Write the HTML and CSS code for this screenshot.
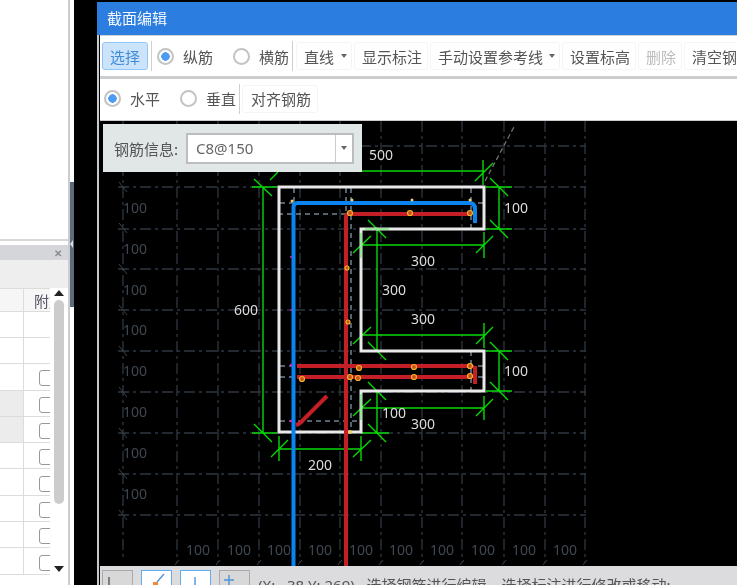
FILE: index.html
```html
<!DOCTYPE html>
<html lang="zh">
<head>
<meta charset="utf-8">
<title>截面编辑</title>
<link rel="stylesheet" href="styles.css">
</head>
<body>
<div class="app">
  <aside class="side">
    <div class="side-blank"></div>
    <div class="dock-head"><span class="dock-x">✕</span></div>
    <div class="dock-tools"></div>
    <div class="table-wrap">
      <div class="table">
        <div class="row head"><div class="c1"></div><div class="c2"><span class="th">附加</span></div></div>
        <div class="row tall"><div class="c1"></div><div class="c2"></div></div>
        <div class="row"><div class="c1"></div><div class="c2"></div></div>
        <div class="row"><div class="c1"></div><div class="c2"><i class="check"></i></div></div>
        <div class="row grey"><div class="c1"></div><div class="c2"><i class="check"></i></div></div>
        <div class="row grey"><div class="c1"></div><div class="c2"><i class="check"></i></div></div>
        <div class="row"><div class="c1"></div><div class="c2"><i class="check"></i></div></div>
        <div class="row"><div class="c1"></div><div class="c2"><i class="check"></i></div></div>
        <div class="row"><div class="c1"></div><div class="c2"><i class="check"></i></div></div>
        <div class="row"><div class="c1"></div><div class="c2"><i class="check"></i></div></div>
        <div class="row"><div class="c1"></div><div class="c2"><i class="check"></i></div></div>
      </div>
      <div class="vscroll">
        <span class="arrow-up"></span>
        <span class="thumb"></span>
        <span class="arrow-down"></span>
      </div>
    </div>
    <div class="hscroll"><span class="hthumb"></span><span class="arrow-right"></span></div>
  </aside>

  <div class="splitter"><div class="split-top"></div><div class="split-bar"><span class="split-arrow"></span></div></div>

  <main class="dialog">
    <header class="title">截面编辑</header>

    <div class="toolbar first">
      <button class="btn active">选择</button>
      <span class="sep"></span>
      <label class="radio-item wide"><i class="radio on"></i>纵筋</label>
      <label class="radio-item"><i class="radio"></i>横筋</label>
      <span class="sep"></span>
      <button class="btn drop w56">直线<i class="caret"></i></button>
      <button class="btn">显示标注</button>
      <button class="btn drop w130">手动设置参考线<i class="caret"></i></button>
      <button class="btn">设置标高</button>
      <button class="btn off">删除</button>
      <button class="btn">清空钢筋</button>
    </div>

    <div class="toolbar second">
      <label class="radio-item wide"><i class="radio on"></i>水平</label>
      <label class="radio-item"><i class="radio"></i>垂直</label>
      <span class="sep"></span>
      <button class="btn">对齐钢筋</button>
    </div>

    <div class="canvas">
      <svg class="drawing" viewBox="100 121 637 445" width="637" height="445" xmlns="http://www.w3.org/2000/svg">
        <g class="grid">
          <path d="M123 121V560M177 121V562M218 121V562M259 121V562M300 121V562M340 121V562M381 121V562M422 121V562M462 121V562M504 121V562M545 121V562M585 121V562"/>
          <path d="M118 146H586M118 187H586M118 229H586M118 269H586M118 310H586M118 351H586M118 392H586M118 433H586M118 474H586M118 515H586"/>
        </g>
        <path class="ticks" d="M119 182l8 10M119 223l8 10M119 264l8 10M119 305l8 10M119 346l8 10M119 387l8 10M119 428l8 10M119 469l8 10M119 510l8 10M175 565l4-5M216 565l4-5M257 565l4-5M298 565l4-5M338 565l4-5M379 565l4-5M420 565l4-5M460 565l4-5M502 565l4-5M543 565l4-5M583 565l4-5"/>
        <g class="grid-labels">
          <text x="135" y="213">100</text><text x="135" y="254">100</text><text x="135" y="295">100</text><text x="135" y="335">100</text><text x="135" y="376">100</text><text x="135" y="417">100</text><text x="135" y="458">100</text><text x="135" y="499">100</text>
          <text x="198" y="555">100</text><text x="239" y="555">100</text><text x="279" y="555">100</text><text x="320" y="555">100</text><text x="361" y="555">100</text><text x="401" y="555">100</text><text x="442" y="555">100</text><text x="483" y="555">100</text><text x="524" y="555">100</text><text x="565" y="555">100</text>
        </g>
        <path class="guide" d="M485 181L515 125"/>
        <path class="ref" d="M280 203H484M278 214H346M280 366H484M280 377H484M280 421H360M294 188V203M346 188V214M351 188V430M471 188V228M471 351V391"/>
        <g class="dims">
          <path d="M278 171H484M483 160V185M475 181L493 163M270 180L278 172"/>
          <path d="M252 187H277M252 433H277M263 187V433M254 179L272 196M254 424L272 442"/>
          <path d="M486 187H512M486 229H512M499 187V229M490 178L508 196M490 220L508 238"/>
          <path d="M361 245H484M361 232V258M484 232V258M353 253L371 236M476 253L493 236"/>
          <path d="M377 229V351M361 351H389M368 220L386 238M368 342L386 360"/>
          <path d="M361 335H484M361 323V349M484 323V348M353 344L371 327M476 344L493 327"/>
          <path d="M486 351H512M486 391H512M499 351V391M490 342L508 360M490 382L508 400"/>
          <path d="M361 408H484M361 394V420M484 396V420M353 416L371 399M476 416L493 399"/>
          <path d="M377 391V433M361 391H389M361 433H389M368 382L386 400M368 424L386 442"/>
          <path d="M279 449H361M279 436V461M361 436V461M271 457L288 440M353 457L371 440"/>
        </g>
        <path class="outline" d="M279 187H484V229H361V351H484V391H361V432H279Z"/>
        <path class="dim-bright" d="M365 229H389M361 233V258M361 394V420"/>
        <path class="rebar red" d="M346 566V217Q346 214 349 214H472M297 366H472M297 377H472M475 366V384M327 396L303 420Q300 424 296 425"/>
        <path class="rebar blue" d="M293.500 566V207Q293.500 203 297.500 203H469Q475 203 475 209V223"/>
        <g class="nodes">
          <circle cx="350" cy="213" r="2.500"/><circle cx="410" cy="213" r="2.500"/><circle cx="470" cy="213" r="2.500"/>
          <circle cx="347" cy="268" r="2"/><circle cx="348" cy="322" r="2"/>
          <circle cx="359" cy="368" r="2.500"/><circle cx="414" cy="367" r="2.500"/><circle cx="470" cy="366" r="2.500"/>
          <circle cx="350" cy="377" r="2.500"/><circle cx="358" cy="378" r="2.500"/><circle cx="414" cy="377" r="2.500"/><circle cx="470" cy="376" r="2.500"/><circle cx="302" cy="379" r="2.500"/>
        </g>
        <g class="nodes-soft">
          <circle cx="292" cy="201" r="1.500"/><circle cx="352" cy="200" r="1.500"/><circle cx="412" cy="200" r="1.500"/><circle cx="470" cy="200" r="1.500"/><circle cx="350" cy="432" r="2"/>
        </g>
        <g class="nodes-pink">
          <circle cx="291" cy="257" r="1"/><circle cx="291" cy="310" r="1"/><circle cx="291" cy="365" r="1.200"/><circle cx="291" cy="421" r="1.200"/>
        </g>
        <g class="dim-labels">
          <text x="381" y="160">500</text><text x="516" y="213">100</text><text x="423" y="266">300</text><text x="394" y="295">300</text><text x="423" y="324">300</text><text x="246" y="315">600</text><text x="516" y="376">100</text><text x="394" y="418">100</text><text x="423" y="429">300</text><text x="320" y="470">200</text>
        </g>
      </svg>

      <div class="info">
        <span class="info-label">钢筋信息:</span>
        <div class="select"><span class="select-value">C8@150</span><span class="select-arrow"><i class="caret"></i></span></div>
      </div>
    </div>

    <footer class="status">
      <span class="tool"><svg viewBox="0 0 29 18" width="29" height="18"><path class="ico-dark" d="M6 6V18"/></svg></span>
      <span class="tool lit"><svg viewBox="0 0 29 18" width="29" height="18"><path class="ico-blue" d="M22 3L15 11"/><rect class="ico-orange" x="11" y="11" width="5" height="5"/></svg></span>
      <span class="tool lit"><svg viewBox="0 0 29 18" width="29" height="18"><path class="ico-blue" d="M14 6V18"/></svg></span>
      <span class="tool"><svg viewBox="0 0 29 18" width="29" height="18"><path class="ico-blue" d="M9 4V14M4 9H14"/></svg></span>
      <span class="status-text">(X:&nbsp;&nbsp; 38 Y: 269)&nbsp;&nbsp; 选择钢筋进行编辑，选择标注进行修改或移动;</span>
    </footer>
  </main>
</div>
</body>
</html>
```

FILE: styles.css
```css
* { box-sizing: border-box; }
html, body { margin: 0; height: 100%; overflow: hidden; }
body {
  background: #000;
  font-family: "Noto Sans", "Noto Sans CJK SC", sans-serif;
  color: #555;
  filter: blur(0.4px);
}
.app { display: flex; width: 737px; height: 585px; background: #000; }

/* left dock */
.side {
  width: 70px; flex: none; height: 585px;
  display: flex; flex-direction: column;
  background: #fff; border-right: 2px solid #c9ced3;
  overflow: hidden;
}
.side-blank { height: 241px; border-bottom: 2px solid #d8d8d8; margin-bottom: 4px; flex: none; }
.dock-head {
  height: 15px; flex: none; background: #d5d6da;
  display: flex; justify-content: flex-end; align-items: center; padding-right: 6px; padding-top: 1px;
}
.dock-x { font-size: 10px; line-height: 1; color: #8a8a8a; font-weight: 700; }
.dock-tools { height: 28px; flex: none; background: #eeeeee; }
.table-wrap { display: flex; height: 292px; flex: none; }
.table { width: 50px; flex: none; overflow: hidden; }
.row { display: flex; height: 26.300px; border-bottom: 1.500px solid #dcdcdc; }
.row.head { height: 24px; border-top: 1.500px solid #dcdcdc; background: #f6f6f6; }
.row.tall { height: 26px; }
.c1 { width: 24px; flex: none; border-right: 1.500px solid #dcdcdc; }
.row.grey .c1 { background: #ececec; }
.c2 { flex: none; width: 26px; position: relative; display: flex; align-items: center; padding-left: 15px; padding-top: 3px; overflow: hidden; }
.th { font-size: 15px; color: #556; margin-left: -5px; white-space: nowrap; font-family: "Noto Sans CJK SC", sans-serif; margin-top: -3px; }
.check { width: 16px; height: 16px; border: 1.500px solid #999; border-radius: 3px; background: #fff; flex: none; }
.vscroll { position: relative; width: 18px; flex: none; background: #fff; display: flex; flex-direction: column; align-items: center; }
.arrow-up { margin-top: 2px; width: 0; height: 0; border: 5px solid transparent; border-top: 0; border-bottom: 6px solid #222; }
.thumb { margin-top: 4px; width: 10px; height: 204px; background: #cccccc; border-radius: 5px; }
.arrow-down { margin-top: 62px; width: 0; height: 0; border: 5px solid transparent; border-bottom: 0; border-top: 6px solid #222; }
.hscroll { display: flex; align-items: center; height: 12px; flex: none; margin-top: 1px; }
.hthumb { width: 16px; height: 8px; background: #d0d0d0; border-radius: 4px; margin-top: 8px; }
.arrow-right { margin-left: 25px; width: 0; height: 0; border: 4px solid transparent; border-right: 0; border-left: 5px solid #333; margin-top: 6px; }

/* splitter */
.splitter { width: 4px; flex: none; display: flex; flex-direction: column; background: #fff; margin-right: 23px; }
.split-top { height: 182px; flex: none; background: #fff; }
.split-bar { height: 125px; flex: none; background: #5f6b78; position: relative; }
.split-arrow {
  position: absolute; left: 0; top: 58px; width: 0; height: 0;
  border: 4px solid transparent; border-left: 0; border-right: 3px solid #d8dde2;
}

/* dialog */
.dialog {
  flex: 1; min-width: 0; margin-top: 2px; height: 583px;
  display: flex; flex-direction: column;
  background: linear-gradient(to right, #c6c9cc 2px, #000 2px);
  overflow: hidden;
}
.title {
  height: 33px; flex: none; background: #2b7de0; color: #f4f8fd;
  font-size: 15px; line-height: 32px; padding-left: 10px;
  font-family: "Noto Sans CJK SC", sans-serif;
}
.toolbar {
  display: flex; align-items: center; flex: none;
  margin-left: 3px; background: #fff; overflow: hidden; white-space: nowrap;
  font-family: "Noto Sans CJK SC", sans-serif; font-size: 15px; color: #555;
}
.toolbar.first { height: 44px; padding: 0 0 0 2px; border-top: 1px solid #cfd2d5; border-bottom: 3px solid #cccdcf; }
.toolbar.second { height: 42px; padding-bottom: 2px; border-bottom: 1px solid #ccc; }
.btn {
  font: inherit; color: inherit; height: 28px; padding: 0 5px 0 7px;
  background: #fff; border: 1px solid #f5f5f5; border-radius: 3px;
  margin-right: 2px; display: inline-flex; align-items: center; flex: none;
}
.second .btn { padding: 0 6px 0 8px; }
.btn.active { width: 46px; justify-content: center; padding: 0; background: #cce4fb; border-color: #90c5f6; color: #3f8cd8; margin-right: 2px; }
.btn.off { color: #bcbcbc; }
.btn.drop { justify-content: space-between; padding: 0 4px 0 7px; }
.w56 { width: 56px; }
.w130 { width: 130px; }
.sep { width: 1px; height: 30px; background: #cfcfcf; flex: none; margin: 0 2px 0 1px; }
.first .sep { margin-right: 3px; }
.radio-item { display: inline-flex; align-items: center; gap: 9px; margin-left: 4px; margin-right: 2px; flex: none; }
.first .radio-item.wide { margin-left: 2px; }
.radio-item.wide { margin-right: 16px; }
.radio {
  width: 17px; height: 17px; border-radius: 50%; border: 2px solid #c3c3c3; background: #fff; flex: none;
}
.radio.on { background: radial-gradient(circle, #4d9cf3 0 4px, #fff 4.500px); }
.caret { width: 0; height: 0; border: 3.500px solid transparent; border-bottom: 0; border-top: 4px solid #666; display: block; }

/* canvas */
.canvas { position: relative; height: 445px; flex: none; margin-left: 3px; background: #000; overflow: hidden; }
.drawing { display: block; }
.grid path { fill: none; stroke: #2f3740; stroke-width: 1.300; stroke-dasharray: 11 4 3 4; }
.ticks { fill: none; stroke: #3a424c; stroke-width: 1; }
.grid-labels text { fill: #3f4751; font-size: 14px; text-anchor: middle; }
.guide { fill: none; stroke: #777; stroke-width: 1.200; stroke-dasharray: 5 3; }
.ref { fill: none; stroke: #a9c4e0; stroke-width: 1; stroke-dasharray: 5 4; }
.dims path { fill: none; stroke: #08d808; stroke-width: 1.400; }
.dim-bright { fill: none; stroke: #7be87b; stroke-width: 1.500; }
.outline { fill: none; stroke: #e9e9e9; stroke-width: 3; }
.rebar { fill: none; stroke-width: 4; }
.rebar.red { stroke: #c41e26; }
.rebar.blue { stroke: #0a85f0; }
.nodes circle { fill: #c8501c; stroke: #f0b52a; stroke-width: 1.200; }
.nodes-soft circle { fill: #f2cf6a; }
.nodes-pink circle { fill: #d020d0; }
.dim-labels text { fill: #dcdcdc; font-size: 14px; text-anchor: middle; }

.info {
  position: absolute; left: 3px; top: 3px; width: 259px; height: 48px;
  background: #e1e6e6; display: flex; align-items: center; padding-left: 11px; gap: 8px;
  font-family: "Noto Sans CJK SC", sans-serif; font-size: 15px; color: #555;
}
.info-label { white-space: nowrap; width: 64px; flex: none; }
.select {
  width: 168px; height: 31px; flex: none; display: flex;
  border: 2px solid #bdbdbd; background: #fff;
}
.select-value { flex: 1; padding-left: 8px; line-height: 27px; color: #666; font-family: "Noto Sans", sans-serif; }
.select-arrow { width: 17px; flex: none; border-left: 1px solid #ccc; display: flex; align-items: center; justify-content: center; }

/* status */
.status {
  height: 19px; flex: none; margin-left: 3px; background: #dcdcde;
  display: flex; align-items: flex-start; padding: 4px 0 0 2px; gap: 8px;
  overflow: hidden; white-space: nowrap;
}
.tool { width: 31px; height: 24px; flex: none; border: 1.500px solid #a9a9a9; background: #d8d8d8; }
.tool.lit { border-color: #5eb0f5; background: #fff; }
.tool svg { display: block; }
.ico-dark { fill: none; stroke: #444; stroke-width: 1.200; }
.ico-blue { fill: none; stroke: #4d94da; stroke-width: 1.400; }
.ico-orange { fill: #f08a3a; }
.status-text { font-family: "Noto Sans", "Noto Sans CJK SC", sans-serif; font-size: 15px; line-height: 18px; color: #555; margin-top: 6px; }
```
